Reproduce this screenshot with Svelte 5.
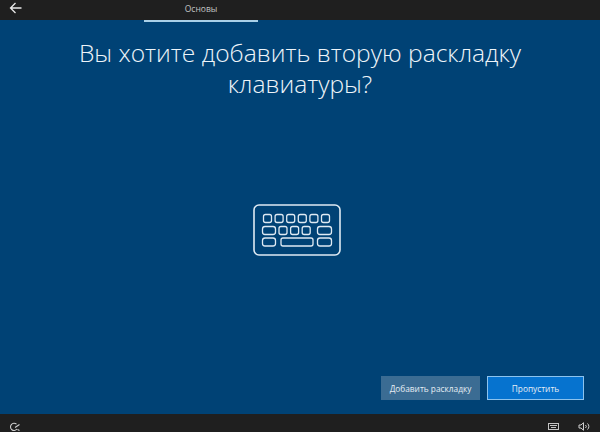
<script>
  const topKeys = [0, 1, 2, 3, 4, 5];
</script>

<div class="page">
  <header class="top">
    <button class="back" aria-label="Назад">
      <svg width="13" height="12" viewBox="0 0 13 12" fill="none" stroke="#e8e8e8" stroke-width="1.3">
        <path d="M12.5 6H1.5M6.5 1 1.5 6l5 5" />
      </svg>
    </button>
    <div class="tab">Основы</div>
  </header>

  <main class="main">
    <h1>Вы хотите добавить вторую раскладку клавиатуры?</h1>
    <div class="icon">
      <svg width="88" height="52" viewBox="0 0 88 52" fill="none" stroke="#dfeaf3" stroke-width="1.3">
        <rect x="1" y="1" width="86" height="50" rx="5" stroke-width="1.6" />
        {#each topKeys as k}
          <rect x={10.5 + k * 11.6} y="10.5" width="8" height="8" rx="2" />
        {/each}
        <rect x="9.5" y="22.5" width="13" height="8" rx="2.5" />
        {#each [0, 1, 2] as k}
          <rect x={26 + k * 11.6} y="22.5" width="8" height="8" rx="2" />
        {/each}
        <rect x="64.5" y="22.5" width="14" height="8" rx="2.5" />
        <rect x="9.5" y="34" width="13" height="8" rx="2.5" />
        <rect x="28" y="34" width="32" height="8" rx="2" />
        <rect x="64.5" y="34" width="14" height="8" rx="2.5" />
      </svg>
    </div>
    <div class="actions">
      <button class="btn secondary">Добавить раскладку</button>
      <button class="btn primary">Пропустить</button>
    </div>
  </main>

  <footer class="bottom">
    <svg width="12" height="10" viewBox="0 0 12 10" fill="none" stroke="#cfcfcf" stroke-width="1.1">
      <path d="M7.5 2.2A3.6 3.6 0 1 0 8 7" />
      <path d="M6 5.5 10.5 2.5M8.5 7.5l2 1" />
    </svg>
    <div class="tray">
      <svg width="11" height="7" viewBox="0 0 11 7" fill="none" stroke="#c4c4c4">
        <rect x="0.5" y="0.5" width="10" height="6" />
        <path d="M2 2.5h7M3 4.5h5" />
      </svg>
      <svg width="12" height="9" viewBox="0 0 12 9" fill="none" stroke="#cfcfcf">
        <path d="M1 3h2L5.5 .7v7.6L3 6H1zM7.5 3a2 2 0 0 1 0 3M9.5 1.5a4 4 0 0 1 0 6" />
      </svg>
    </div>
  </footer>
</div>

<style>
  :global(body) {
    margin: 0;
    background: #1f1f1f;
  }
  .page {
    width: 600px;
    height: 432px;
    display: flex;
    flex-direction: column;
    font-family: "Open Sans", "Noto Sans", sans-serif;
    overflow: hidden;
  }
  .top {
    height: 20px;
    background: #1f1f1f;
    display: flex;
    align-items: flex-start;
    flex: none;
    padding-left: 9px;
    position: relative;
    z-index: 1;
  }
  .back {
    padding: 0;
    margin-top: 2px;
    border: 0;
    background: none;
    line-height: 0;
  }
  .tab {
    width: 114px;
    height: 22px;
    box-sizing: border-box;
    margin-left: 122px;
    text-align: center;
    font-size: 8.5px;
    line-height: 18px;
    color: #c4c4c4;
    border-bottom: 2px solid #a9d0e8;
  }
  .main {
    flex: 1;
    background: #004275;
    display: flex;
    flex-direction: column;
    align-items: center;
  }
  h1 {
    margin: 17px 0 0;
    width: 470px;
    font-weight: 300;
    font-size: 24.6px;
    line-height: 31px;
    text-align: center;
    color: #eef4f9;
  }
  .icon {
    margin: 105px 0 0 -7px;
    line-height: 0;
  }
  .actions {
    margin-top: auto;
    margin-bottom: 14px;
    align-self: flex-end;
    margin-right: 16px;
    display: flex;
    gap: 7px;
  }
  .btn {
    height: 24px;
    box-sizing: border-box;
    font-family: inherit;
    font-size: 8.3px;
    color: #e6eef4;
    border: 0;
    padding: 0;
  }
  .secondary {
    width: 99px;
    background: #3b6c93;
  }
  .primary {
    width: 97px;
    background: #0673cf;
    border: 1px solid #8cc3ee;
  }
  .bottom {
    height: 18px;
    flex: none;
    background: #1f1f1f;
    box-sizing: border-box;
    display: flex;
    justify-content: space-between;
    align-items: flex-start;
    padding: 8px 10px 0 9px;
  }
  .tray {
    display: flex;
    align-items: center;
    gap: 19px;
  }
</style>
